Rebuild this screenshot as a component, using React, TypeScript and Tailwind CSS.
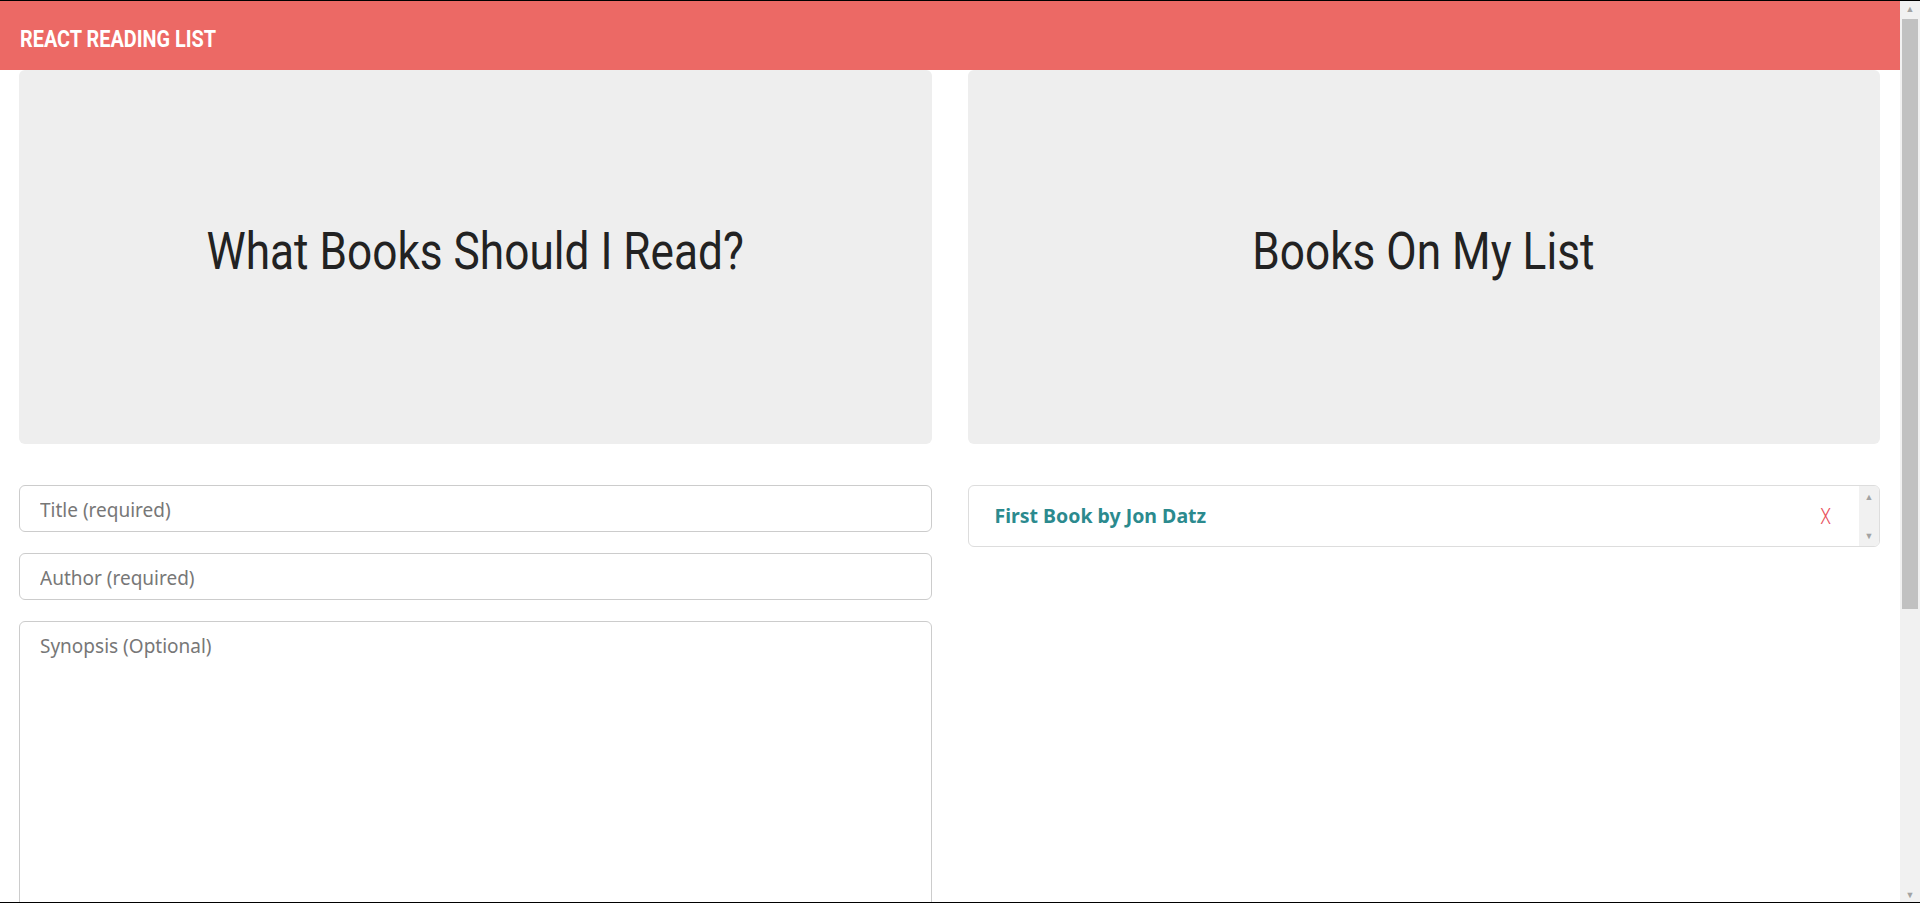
import React from 'react'

const narrow = { fontFamily: 'Roboto, "Liberation Sans", sans-serif' }

function Jumbo({ title }: { title: string }) {
  return (
    <div className="h-[374px] rounded-md bg-[#eeeeee] flex items-center justify-center">
      <h1 style={narrow} className="text-[52px] leading-none text-[#222222] scale-x-[0.85] -mt-[11px]">
        {title}
      </h1>
    </div>
  )
}

export default function App() {
  const inputCls =
    'w-full h-[47px] rounded-md border border-[#cccccc] bg-white px-[20px] pt-[2px] text-[19px] text-[#555] placeholder:text-[#777777] outline-none'

  return (
    <div
      className="h-[903px] w-[1920px] flex border-y border-black overflow-hidden bg-white"
      style={{ fontFamily: '"Noto Sans", "Open Sans", sans-serif' }}
    >
      <div className="flex-1 flex flex-col">
        {/* Header */}
        <header className="h-[69px] shrink-0 bg-[#ec6965] flex items-center pl-[20px]">
          <span style={narrow} className="origin-left scale-x-[0.845] text-white text-[23.5px] font-bold mt-[9px]">
            REACT READING LIST
          </span>
        </header>

        <div className="grid grid-cols-2 gap-x-[36px] pl-[19px] pr-[20px]">
          {/* Left */}
          <div className="flex flex-col">
            <Jumbo title="What Books Should I Read?" />
            <div className="mt-[41px] flex flex-col gap-[21px]">
              <input className={inputCls} placeholder="Title (required)" />
              <input className={inputCls} placeholder="Author (required)" />
              <textarea
                className="w-full h-[420px] rounded-md border border-[#cccccc] bg-white px-[20px] py-[10px] text-[19px] placeholder:text-[#777777] outline-none resize-none"
                placeholder="Synopsis (Optional)"
              />
            </div>
          </div>

          {/* Right */}
          <div className="flex flex-col">
            <Jumbo title="Books On My List" />
            <div className="mt-[41px] h-[62px] rounded-md border border-[#dddddd] flex overflow-hidden">
              <div className="flex-1 flex items-center pl-[26px] pr-[27px]">
                <span className="text-[19.5px] font-bold text-[#2b8a8e]">First Book by Jon Datz</span>
                <span style={narrow} className="ml-auto text-[22px] font-light text-[#e8505b] scale-x-[0.8]">
                  X
                </span>
              </div>
              <div className="w-[20px] bg-[#f1f1f1] flex flex-col items-center justify-between py-[6px] text-[#a3a3a3] text-[9px] leading-none">
                <span>▲</span>
                <span>▼</span>
              </div>
            </div>
          </div>
        </div>
      </div>

      {/* Window scrollbar */}
      <div className="w-[20px] shrink-0 bg-[#f1f1f1] flex flex-col items-center py-[3px] text-[#a3a3a3] text-[9px] leading-none">
        <span>▲</span>
        <div className="mt-[6px] w-[16px] h-[590px] bg-[#c1c1c1]" />
        <span className="mt-auto">▼</span>
      </div>
    </div>
  )
}
